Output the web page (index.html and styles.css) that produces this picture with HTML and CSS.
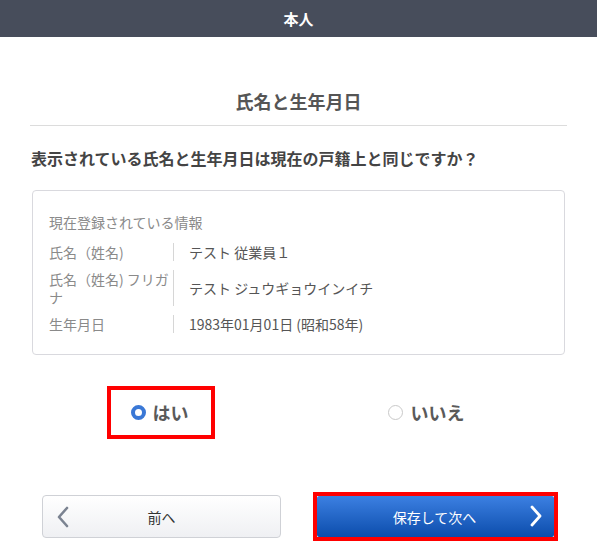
FILE: index.html
```html
<!DOCTYPE html>
<html lang="ja">
<head>
<meta charset="utf-8">
<title>本人</title>
<link rel="stylesheet" href="styles.css">
</head>
<body>
<header class="topbar">本人</header>
<main class="main">
  <h1 class="title">氏名と生年月日</h1>
  <p class="question">表示されている氏名と生年月日は現在の戸籍上と同じですか？</p>
  <section class="card">
    <div class="card-head">現在登録されている情報</div>
    <div class="rows">
      <div class="row">
        <div class="label">氏名（姓名)</div>
        <div class="value">テスト 従業員１</div>
      </div>
      <div class="row">
        <div class="label">氏名（姓名) フリガナ</div>
        <div class="value">テスト ジュウギョウインイチ</div>
      </div>
      <div class="row">
        <div class="label">生年月日</div>
        <div class="value">1983年01月01日 (昭和58年)</div>
      </div>
    </div>
  </section>
  <div class="choices">
    <label class="choice choice-marked"><span class="radio radio-on"></span><span class="choice-text">はい</span></label>
    <label class="choice"><span class="radio"></span><span class="choice-text">いいえ</span></label>
  </div>
  <div class="actions">
    <button class="btn-prev" type="button">
      <svg class="chev" width="14" height="22" viewBox="0 0 14 22"><path d="M11 2 L3 11 L11 20" fill="none" stroke="#7b8391" stroke-width="2.6" stroke-linecap="round" stroke-linejoin="round"/></svg>
      <span>前へ</span>
    </button>
    <div class="next-frame">
      <button class="btn-next" type="button">
        <span>保存して次へ</span>
        <svg class="chev-r" width="14" height="22" viewBox="0 0 14 22"><path d="M3 2 L11 11 L3 20" fill="none" stroke="#ffffff" stroke-width="2.8" stroke-linecap="round" stroke-linejoin="round"/></svg>
      </button>
    </div>
  </div>
</main>
</body>
</html>
```
FILE: styles.css
```css
* { box-sizing: border-box; }
body {
  margin: 0;
  background: #fff;
  font-family: "Noto Sans CJK JP", "Noto Sans", sans-serif;
  color: #555;
}
.topbar {
  height: 37px;
  line-height: 37px;
  background: #474d5b;
  color: #fff;
  text-align: center;
  font-size: 15px;
  font-weight: 700;
}
.main {
  padding: 0 32px;
}
.title {
  margin: 51px -2px 0;
  padding-bottom: 11px;
  border-bottom: 1px solid #dcdcdc;
  font-size: 18px;
  line-height: 26px;
  font-weight: 700;
  color: #555;
  text-align: center;
}
.question {
  margin: 20px 0 0 -1px;
  font-size: 16px;
  line-height: 24px;
  font-weight: 700;
  color: #444;
}
.card {
  margin-top: 20px;
  border: 1px solid #d9d9de;
  border-radius: 4px;
  padding: 22px 16px 21px;
}
.card-head {
  font-size: 14px;
  line-height: 18px;
  color: #8a8a8a;
}
.rows {
  margin-top: 12px;
  display: flex;
  flex-direction: column;
  gap: 9px;
}
.row {
  display: flex;
  align-items: center;
  font-size: 14px;
  line-height: 18px;
}
.label {
  width: 125px;
  flex: none;
  align-self: stretch;
  padding-right: 4px;
  border-right: 1px solid #d6d6d6;
  color: #8a8a8a;
}
.value {
  padding-left: 15px;
  color: #555;
}
.choices {
  margin-top: 31px;
  display: grid;
  grid-template-columns: 257px 1fr;
  align-items: center;
}
.choice {
  justify-self: center;
  display: flex;
  align-items: center;
  gap: 8px;
  padding: 10px 22px 10px 20px;
  border: 4px solid transparent;
  font-size: 18px;
  line-height: 25px;
  font-weight: 700;
  color: #5a5a5a;
}
.choice-marked {
  border-color: #ff0000;
  gap: 7px;
}
.radio {
  width: 15px;
  height: 15px;
  border-radius: 50%;
  border: 1px solid #c9c9c9;
  background: #fff;
  flex: none;
}
.radio-on {
  border: 4.5px solid #3a78d6;
}
.actions {
  margin-top: 53px;
  display: flex;
  justify-content: space-between;
  align-items: center;
  padding: 0 7px 0 10px;
}
.btn-prev {
  position: relative;
  width: 239px;
  height: 43px;
  border: 1px solid #cfd1d6;
  border-radius: 4px;
  background: linear-gradient(#ffffff, #eff0f3);
  font-family: inherit;
  font-size: 14px;
  color: #333;
  display: flex;
  align-items: center;
  justify-content: center;
  padding: 0;
}
.btn-prev .chev {
  position: absolute;
  left: 13px;
  top: 10px;
}
.next-frame {
  border: 4px solid #ff0000;
}
.btn-next {
  position: relative;
  width: 237px;
  height: 41px;
  border: none;
  border-radius: 2px;
  background: linear-gradient(#3c80e2, #0c4dac);
  font-family: inherit;
  font-size: 14px;
  color: #fff;
  display: flex;
  align-items: center;
  justify-content: center;
  padding: 0 2px 0 0;
}
.btn-next .chev-r {
  position: absolute;
  right: 11px;
  top: 9px;
}
```
